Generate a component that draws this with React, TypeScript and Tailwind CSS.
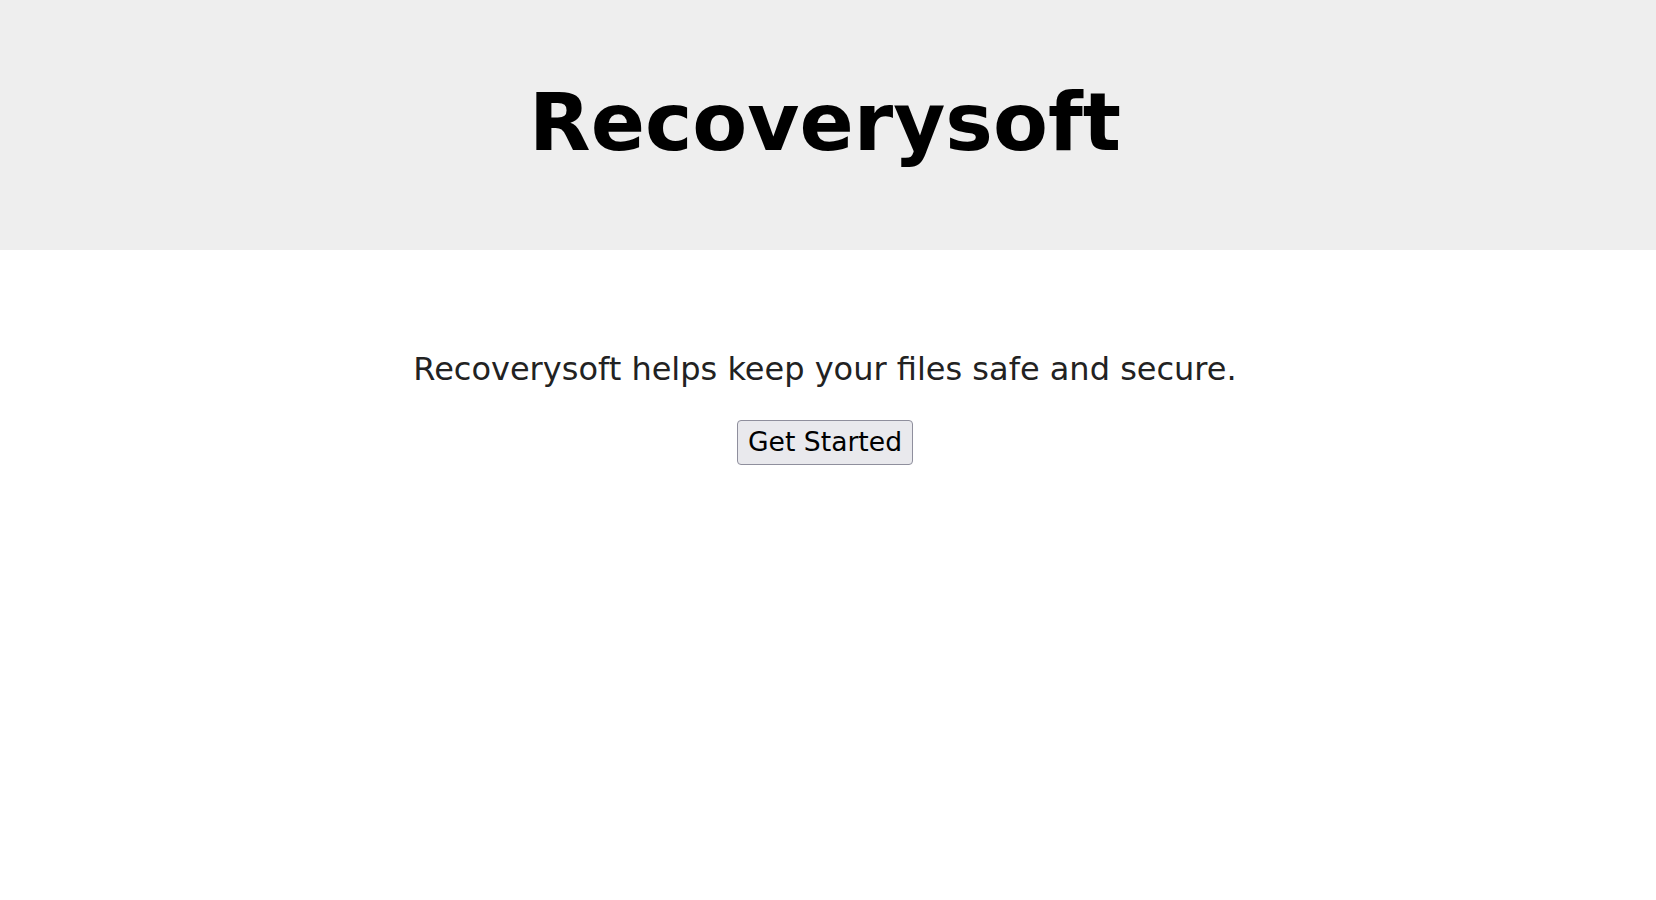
export default function App() {
  return (
    <div className="min-h-[900px] bg-white pr-[6px]" style={{ fontFamily: '"DejaVu Sans", sans-serif' }}>
      <header className="h-[250px] bg-[#eeeeee] -mr-[6px] pr-[6px] flex items-center justify-center">
        <h1 className="text-[80px] font-bold text-black leading-normal mb-[4px]">Recoverysoft</h1>
      </header>
      <main className="flex flex-col items-center pt-[95px]">
        <p className="text-[32px] leading-normal text-[#222222]">
          Recoverysoft helps keep your files safe and secure.
        </p>
        <button className="mt-[27px] h-[45px] px-[10px] text-[26.6px] leading-none text-black bg-[#e9e9ed] border border-[#8f8f9d] rounded-[4px]">
          Get Started
        </button>
      </main>
    </div>
  );
}
